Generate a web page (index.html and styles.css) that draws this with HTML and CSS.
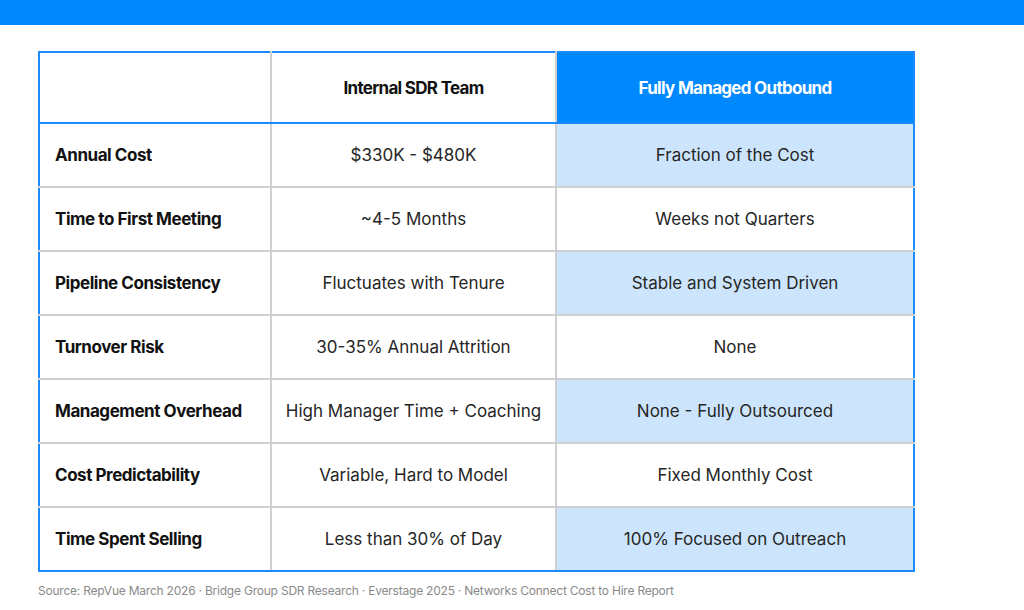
FILE: index.html
```html
<!DOCTYPE html>
<html>
<head>
<meta charset="utf-8">
<link rel="stylesheet" href="styles.css">
</head>
<body>
<div class="topbar"></div>
<main class="content">
  <table class="compare">
    <colgroup>
      <col class="c1"><col class="c2"><col class="c3">
    </colgroup>
    <thead>
      <tr>
        <th class="blank"></th>
        <th class="h-internal">Internal SDR Team</th>
        <th class="h-managed">Fully Managed Outbound</th>
      </tr>
    </thead>
    <tbody>
      <tr class="alt"><td class="label">Annual Cost</td><td>$330K - $480K</td><td class="hl">Fraction of the Cost</td></tr>
      <tr><td class="label">Time to First Meeting</td><td>~4-5 Months</td><td class="hl">Weeks not Quarters</td></tr>
      <tr class="alt"><td class="label">Pipeline Consistency</td><td>Fluctuates with Tenure</td><td class="hl">Stable and System Driven</td></tr>
      <tr><td class="label">Turnover Risk</td><td>30-35% Annual Attrition</td><td class="hl">None</td></tr>
      <tr class="alt"><td class="label">Management Overhead</td><td>High Manager Time + Coaching</td><td class="hl">None - Fully Outsourced</td></tr>
      <tr><td class="label">Cost Predictability</td><td>Variable, Hard to Model</td><td class="hl">Fixed Monthly Cost</td></tr>
      <tr class="alt"><td class="label">Time Spent Selling</td><td>Less than 30% of Day</td><td class="hl">100% Focused on Outreach</td></tr>
    </tbody>
  </table>
  <p class="source">Source: RepVue March 2026 · Bridge Group SDR Research · Everstage 2025 · Networks Connect Cost to Hire Report</p>
</main>
</body>
</html>
```
FILE: styles.css
```css
html, body {
  margin: 0;
  padding: 0;
  background: #ffffff;
  font-family: Inter, "Liberation Sans", sans-serif;
  color: #222222;
}
.topbar {
  height: 25px;
  background: #0088ff;
}
.content {
  padding: 26px 0 0 38px;
}
.compare {
  border-collapse: collapse;
  width: 875px;
  table-layout: fixed;
  border: 2px solid #1a8cff;
}
.c1 { width: 232px; }
.c2 { width: 285px; }
.c3 { width: 358px; }
.compare th,
.compare td {
  border: 2px solid #cfcfcf;
  text-align: center;
  padding: 0;
}
.compare thead th {
  height: 69px;
  font-weight: 700;
  font-size: 17px;
  letter-spacing: -0.7px;
  color: #111111;
  border-bottom: 2px solid #1a8cff;
  border-top: 2px solid #1a8cff;
}
.compare thead th.blank { border-left: 2px solid #1a8cff; }
.compare thead th.h-managed {
  background: #0088ff;
  color: #ffffff;
  border-color: #1a8cff;
}
.compare tbody td {
  height: 62px;
  font-size: 17px;
  color: #262626;
}
.compare tbody td.label {
  text-align: left;
  padding-left: 15px;
  font-weight: 700;
  font-size: 17px;
  letter-spacing: -0.45px;
  color: #111111;
  border-left: 2px solid #1a8cff;
}
.compare tbody td.hl { border-right: 2px solid #1a8cff; }
.compare tbody tr.alt td.hl { background: #cce5fc; }
.compare tbody tr:last-child td { border-bottom: 2px solid #1a8cff; }
.source {
  margin: 11px 0 0 0;
  font-size: 12px;
  color: #8a8a8a;
  letter-spacing: -0.22px;
}
```
